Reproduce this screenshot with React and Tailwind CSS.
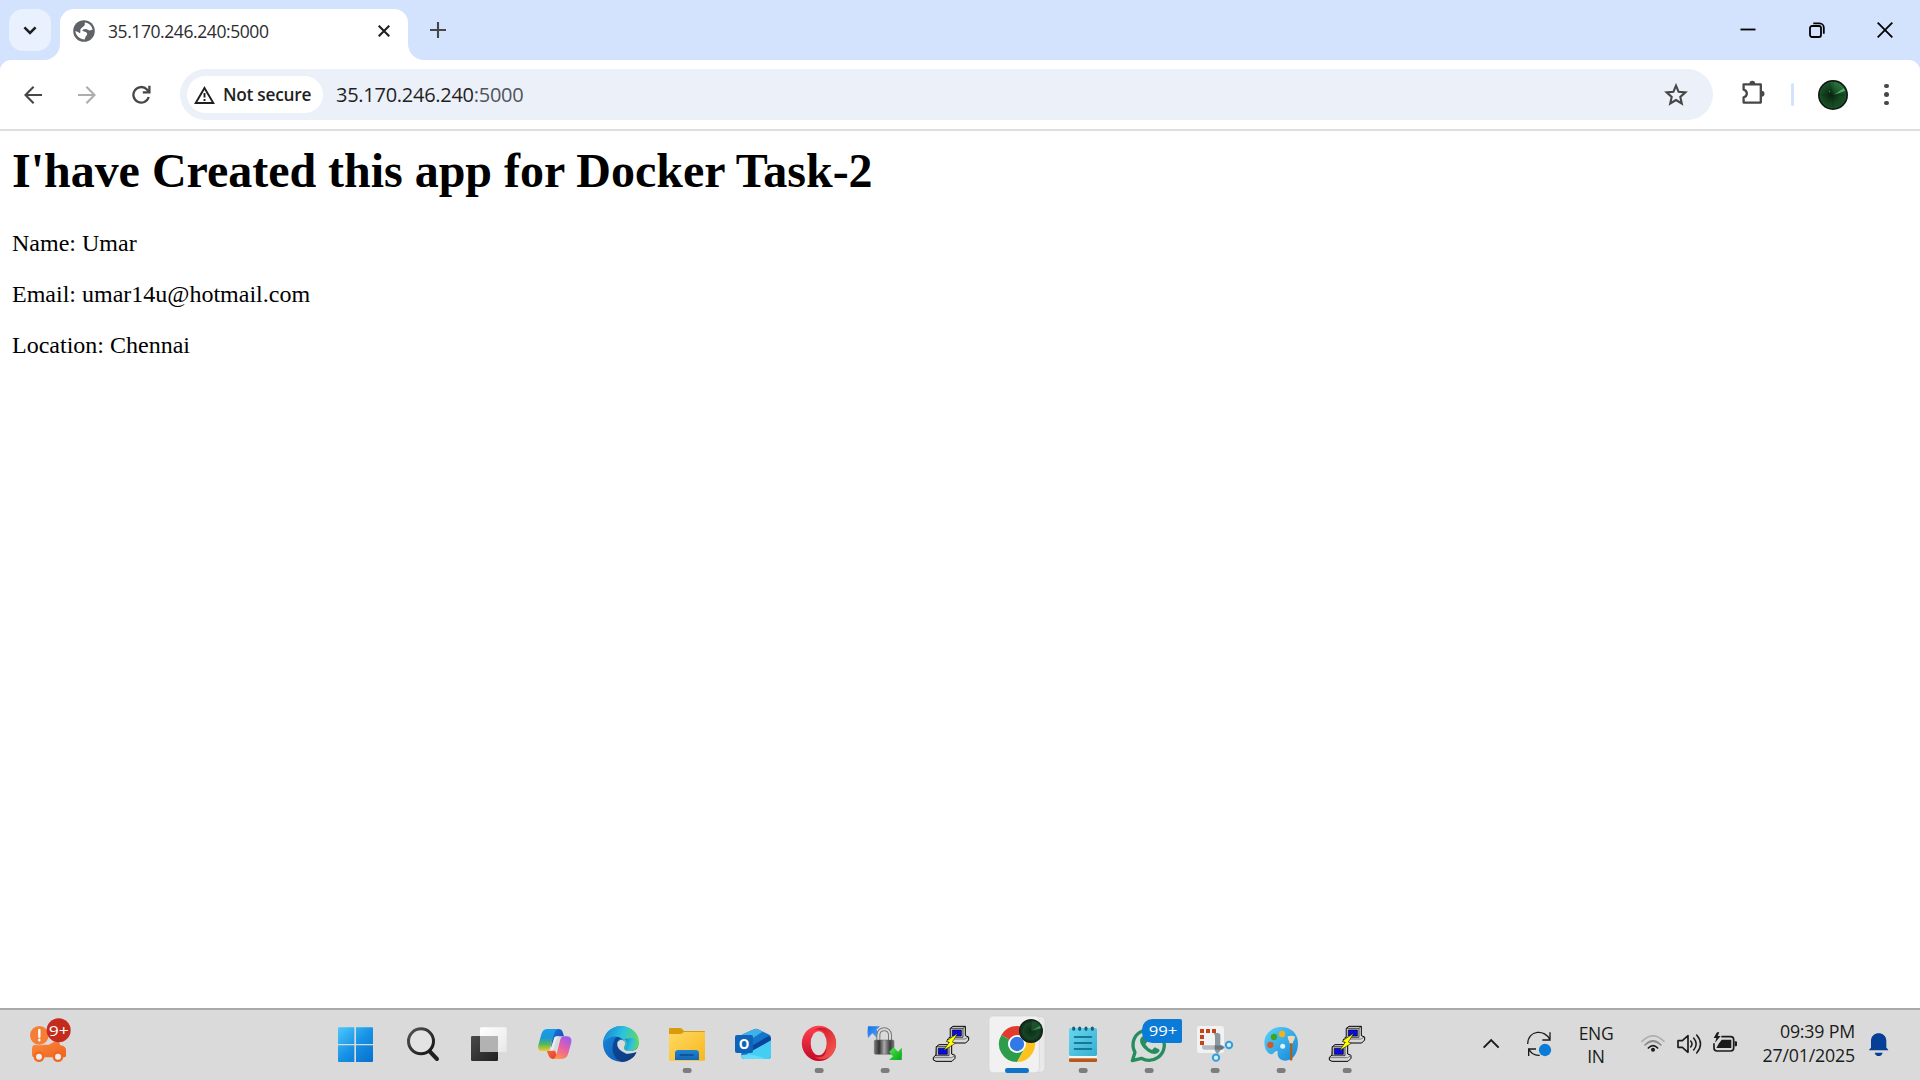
import React from "react";

const UI = "font-['Open_Sans','Noto_Sans',sans-serif]";

/* ---------- Browser chrome ---------- */

function GlobeIcon() {
  return (
    <svg width="22" height="22" viewBox="0 0 22 22">
      <circle cx="11" cy="11" r="10.8" fill="#5f6368" />
      <path d="M11.8 2.4C16 2.8 19 5.800 19.600 9.800L16.500 10.400 13 9Q9.600 8.800 9.200 10.800L13.200 12.200Q15.400 14 12.800 16.200L11.600 19.500C7 19.200 3 16 2.300 11L5.500 12.200Q7.200 14 7.400 12Q6.800 8.200 9.600 7.200L11.800 5z" fill="#fff" />
    </svg>
  );
}

function TabStrip() {
  return (
    <div className="flex h-[60px] bg-[#d3e2fd]">
      <div className="flex items-center pl-[9px] w-[60px]">
        <button className="flex h-[42px] w-[42px] items-center justify-center rounded-[14px] bg-[#e9f0fe]">
          <svg width="14" height="9" viewBox="0 0 14 9" fill="none" stroke="#1f1f1f" strokeWidth="2.6">
            <path d="M1.4 1.4 7 7l5.6-5.6" />
          </svg>
        </button>
      </div>
      <div className="relative mt-[9px] flex h-[51px] w-[348px] items-center rounded-t-[14px] bg-white pl-[13px] pr-[18px]">
        <svg className="absolute bottom-0 -left-[16px]" width="16" height="16">
          <path d="M16 0v16H0A16 16 0 0 0 16 0z" fill="#fff" />
        </svg>
        <svg className="absolute bottom-0 -right-[16px]" width="16" height="16">
          <path d="M0 0v16h16A16 16 0 0 1 0 0z" fill="#fff" />
        </svg>
        <div className="-mt-[8px]"><GlobeIcon /></div>
        <span className="ml-[13px] -mt-[8px] text-[17.5px] leading-6 tracking-[-0.42px] text-[#2c2d30]">35.170.246.240:5000</span>
        <svg className="-mt-[8px] ml-auto" width="12" height="12" viewBox="0 0 12 12" stroke="#1f1f1f" strokeWidth="2.1">
          <path d="M.7.7l10.6 10.6M11.3.7.7 11.3" />
        </svg>
      </div>
      <svg className="ml-[22px] mt-[22px]" width="16" height="16" viewBox="0 0 16 16" stroke="#474747" strokeWidth="2.1">
        <path d="M8 0v16M0 8h16" />
      </svg>
      <div className="ml-auto mt-[21px] flex h-[17px] w-[153px] items-center justify-between mr-[27px]">
        <svg width="16" height="16" viewBox="0 0 16 16" stroke="#000" strokeWidth="1.8"><path d="M.5 7.500h15" /></svg>
        <svg width="16" height="16" viewBox="0 0 16 16" fill="none" stroke="#000" strokeWidth="1.8">
          <rect x="1" y="4" width="11" height="11" rx="2" />
          <path d="M4.3 1.3h6.2a4.3 4.3 0 0 1 4.3 4.3v6.2" />
        </svg>
        <svg width="16" height="16" viewBox="0 0 16 16" stroke="#000" strokeWidth="1.8"><path d="M.7.7l14.6 14.6M15.3.7.7 15.3" /></svg>
      </div>
    </div>
  );
}

function Avatar() {
  return (
    <svg width="30" height="30" viewBox="0 0 30 30">
      <defs>
        <radialGradient id="radar" cx=".42" cy=".5" r=".6">
          <stop offset="0" stopColor="#0a2210" /><stop offset=".6" stopColor="#154a22" /><stop offset="1" stopColor="#174f26" />
        </radialGradient>
        <linearGradient id="sweep" x1="0" y1="1" x2=".7" y2="0">
          <stop offset="0" stopColor="#12401d" /><stop offset="1" stopColor="#3a8f50" />
        </linearGradient>
      </defs>
      <circle cx="15" cy="15" r="15" fill="#101a13" />
      <circle cx="15" cy="15" r="13" fill="url(#radar)" stroke="#1f5a2e" strokeWidth=".8" />
      <path d="M15 15 13 2.200A13 13 0 0 1 26 8z" fill="url(#sweep)" opacity=".7" />
      <path d="M16 14.800 25.800 8 27.200 11z" fill="#4fae68" />
      <path d="M2 15h25M15 2v25" stroke="#0a2a12" strokeWidth=".5" opacity=".6" />
      <circle cx="11.5" cy="11.500" r=".7" fill="#5c7a3c" />
    </svg>
  );
}

function Toolbar() {
  return (
    <div className="bg-[#d3e2fd]">
      <div className="flex h-[71px] items-center rounded-t-[11px] border-b-2 border-[#dedede] bg-white pl-[24px]">
        <svg className="mt-px" width="18" height="18" viewBox="0 0 18 18" fill="none" stroke="#474747" strokeWidth="2.1"><path d="M18 9H1.6M9.6.8 1.5 9l8.1 8.2" /></svg>
        <svg className="ml-[36px] mt-px" width="18" height="18" viewBox="0 0 18 18" fill="none" stroke="#adadad" strokeWidth="2.1"><path d="M0 9h16.4M8.4.8 16.5 9l-8.1 8.2" /></svg>
        <svg className="ml-[36px]" width="19" height="20" viewBox="0 0 19 20" fill="none" stroke="#474747" strokeWidth="2.3">
          <path d="M16.7 12A7.8 7.8 0 1 1 15 4.6l2.4 2.4" /><path d="M17.4.8v6.6h-6.6" />
        </svg>
        <div className="ml-[29px] flex h-[51px] w-[1533px] items-center rounded-full bg-[#ecf0f9] pl-[7px] pr-[25px]">
          <div className="flex h-[37px] w-[136px] items-center rounded-full bg-white pl-[7px]">
            <svg width="21" height="18" viewBox="0 0 21 18" fill="none" stroke="#1f1f1f" strokeWidth="1.9">
              <path d="M10.5 1.9 19.3 17H1.7z" /><path d="M10.5 7v4.6M10.5 13v2" />
            </svg>
            <span className="ml-[8px] whitespace-nowrap text-[17.3px] font-semibold leading-6 tracking-[-0.26px] text-[#1f1f1f]">Not secure</span>
          </div>
          <span className="ml-[13px] text-[20px] leading-7 tracking-[-0.27px] text-[#1f1f1f]">35.170.246.240<span className="text-[#50555b]">:5000</span></span>
          <svg className="ml-auto" width="24" height="23" viewBox="0 0 24 23" fill="none" stroke="#474747" strokeWidth="2.1">
            <path d="m12 2.6 2.6 6.2 6.8.6-5.1 4.5 1.5 6.6-5.8-3.5-5.8 3.5 1.5-6.6-5.1-4.5 6.8-.6z" />
          </svg>
        </div>
        <svg className="ml-[28px] -mt-[4px]" width="25" height="25" viewBox="0 0 25 25">
          <path d="M2.6 4.4h17.2v18.2H2.6v-5.2c2.2-.6 3.2-2 3.2-3.9S4.800 10.200 2.600 9.600z" fill="none" stroke="#474747" strokeWidth="2.3" strokeLinejoin="round" />
          <path d="M8.400 4a2.900 3.200 0 0 1 5.800 0zM20.500 10.700a3 3 0 0 1 0 6z" fill="#474747" />
        </svg>
        <div className="ml-[25px] h-[23px] w-[3px] rounded-full bg-[#d3e2fd]" />
        <div className="ml-[24px]"><Avatar /></div>
        <div className="ml-[36px] flex flex-col gap-[4px]">
          <i className="h-[4.500px] w-[4.500px] rounded-full bg-[#474747]" />
          <i className="h-[4.500px] w-[4.500px] rounded-full bg-[#474747]" />
          <i className="h-[4.500px] w-[4.500px] rounded-full bg-[#474747]" />
        </div>
      </div>
    </div>
  );
}

/* ---------- Taskbar ---------- */

function Cell({ x, children, running }) {
  return (
    <svg className="block shrink-0" width="66" height="70" viewBox={`${x} 30 198 210`}>
      {children}
      {running && <rect x={x + 86} y="204" width="27" height="15" rx="7" fill="#7d7d7d" />}
    </svg>
  );
}

function Grad({ id, from, to, x2 = 1, y2 = 1 }) {
  return (
    <linearGradient id={id} x1="0" y1="0" x2={x2} y2={y2}>
      <stop offset="0" stopColor={from} /><stop offset="1" stopColor={to} />
    </linearGradient>
  );
}

function Putty() {
  return (
    <g stroke="#000" strokeWidth="3" strokeLinejoin="miter">
      <path d="M301 85l8-6h37v28l10 4v9l-9 9h-46l-8-4v-8l8-7z" fill="#d9d9d9" />
      <path d="M301 85h38v27h-38zM339 85l7-6" fill="#c9c9c9" strokeWidth="2" />
      <path d="M307 90h27v18h-27z" fill="#0a0af0" strokeWidth="2" />
      <path d="M294 117h51l10-6" fill="none" stroke="#777" strokeWidth="3" />
      <path d="M259 140l8-6h38v28l10 4v9l-9 9h-48l-8-4v-8l8-7z" fill="#d9d9d9" />
      <path d="M259 140h38v27h-38zM297 140l7-6" fill="#c9c9c9" strokeWidth="2" />
      <path d="M265 145h27v18h-27z" fill="#0a0af0" strokeWidth="2" />
      <path d="M252 173h53l9-6" fill="none" stroke="#777" strokeWidth="3" />
      <path d="M324 99l-36 25 10 3-18 25 36-22-9-4z" fill="#ff0" strokeWidth="1.500" />
    </g>
  );
}

function Apps() {
  return (
    <div className="ml-[253px] flex">
      <Cell x={12}>
        <defs><linearGradient id="win" gradientUnits="userSpaceOnUse" x1="54" y1="82" x2="150" y2="186"><stop offset="0" stopColor="#4cc8fb" /><stop offset=".55" stopColor="#1590e4" /><stop offset="1" stopColor="#0873cf" /></linearGradient></defs>
        <g fill="url(#win)"><path d="M57 82h46v50H54V85q0-3 3-3zM108 82h48q3 0 3 3v47h-51zM54 136h49v50H57q-3 0-3-3zM108 136h51v47q0 3-3 3h-48z" /></g>
      </Cell>
      <Cell x={210}>
        <defs><Grad id="mag" from="#555" to="#111" /></defs>
        <path d="M328 153l23 24" stroke="#202020" strokeWidth="12" strokeLinecap="round" />
        <circle cx="303" cy="124" r="37.500" fill="#e3e3e3" stroke="url(#mag)" strokeWidth="9" />
      </Cell>
      <Cell x={408}>
        <defs><Grad id="tv1" from="#4a4a4a" to="#202020" /><Grad id="tv2" from="#fff" to="#e8e8e8" /></defs>
        <rect x="453" y="108" width="81" height="75" rx="4" fill="url(#tv1)" />
        <rect x="480" y="82" width="80" height="74" rx="4" fill="url(#tv2)" />
        <path d="M480 108h54v48h-50q-4 0-4-4z" fill="#b2b2b2" />
      </Cell>
      <Cell x={606}>
        <defs>
          <linearGradient id="co1" x1="0" y1="0" x2="0" y2="1"><stop offset="0" stopColor="#159df0" /><stop offset=".4" stopColor="#1b98d2" /><stop offset=".7" stopColor="#57b75d" /><stop offset="1" stopColor="#f2cd20" /></linearGradient>
          <linearGradient id="co2" x1=".7" y1="0" x2=".2" y2="1"><stop offset="0" stopColor="#9d5bec" /><stop offset=".45" stopColor="#e45fa9" /><stop offset=".8" stopColor="#fb7e68" /><stop offset="1" stopColor="#ff9b4f" /></linearGradient>
          <Grad id="co3" from="#1779df" to="#173da5" /><Grad id="co4" from="#f26b38" to="#e7372b" />
        </defs>
        <path d="M698 87h18q9 0 12 9l4 13h-16q-10 0-14 11l-9 25z" fill="url(#co3)" />
        <path d="M680 152h25l10 25h-17q-8 0-11-8z" fill="url(#co4)" />
        <path d="M683 87h31q-8 2-11 12l-12 43q-3 11-13 11h-12q-14 0-11-18l9-32q4-16 19-16z" fill="url(#co1)" />
        <path d="M730 109h12q14 1 12 18l-9 33q-5 17-19 17h-28q8-2 11-12l11-43q3-13 10-13z" fill="url(#co2)" />
        <path d="M703 112q3-3 7-3h8q-7 2-10 12l-7 25q-2 5-6 6h-4z" fill="#efe9f1" />
      </Cell>
      <Cell x={24}>
        <defs>
          <linearGradient id="ed1" x1="0" y1=".3" x2="1" y2=".6"><stop offset="0" stopColor="#1689d6" /><stop offset=".5" stopColor="#2cc2df" /><stop offset="1" stopColor="#68dc4c" /></linearGradient>
          <Grad id="ed2" from="#1c8be0" to="#0b4fae" /><Grad id="ed3" from="#0c4a9a" to="#0d3b7b" />
        </defs>
        <circle cx="122" cy="132" r="53" fill="url(#ed2)" />
        <path d="M69 129C72 98 95 78 123 78c30 0 54 21 54 49 0 17-13 25-27 25-13 0-21-4-18-9 6-10 5-18-2-24-11-10-37-19-61 10z" fill="url(#ed1)" />
        <path d="M103 121q5-17 21-5-11 0-12 16 1 22 27 29 14 2 27-5 6-2 3 4c-8 15-24 25-42 26-20-5-31-26-29-45q0-10 5-20z" fill="url(#ed3)" />
        <path d="M170 156q6-4 9-7v20l-13 17h-20q17-10 24-30z" fill="#dadada" />
        <path d="M177 132q-3 18-20 20-28 2-25-9 6-10 2-19-12-11-22 3-4 22 27 34 17 1 38-7z" fill="#dadada" />
        <path d="M133 117q13 10 2 26c-4 6 5 9 16 9 14 0 26-8 26-25l-17-14z" fill="url(#ed1)" />
      </Cell>
      <Cell x={222} running>
        <defs><Grad id="fo" from="#ffd963" to="#f7b71d" /><Grad id="fo2" from="#1f84d2" to="#1566b0" x2={0} /></defs>
        <path d="M267 87q0-3 4-3h29q4 0 7 4l5 5h60q3 0 3 3v12H267z" fill="#d99b0b" />
        <path d="M267 102h34q4 0 7-3l4-3h63v83q0 3-4 3H271q-4 0-4-3z" fill="url(#fo)" />
        <path d="M285 180v-20q0-10 10-10h52q10 0 10 10v20z" fill="url(#fo2)" />
        <path d="M301 165h38" stroke="#0b4b8f" strokeWidth="5" strokeLinecap="round" />
      </Cell>
      <Cell x={420}>
        <defs><Grad id="ou" from="#1384dc" to="#43d3f5" /></defs>
        <path d="M484 111q0-5 4-8l34-15q6-3 12 0l34 16q5 3 5 9v54q0 10-10 10h-70q-9 0-9-9z" fill="#1476ca" />
        <path d="M488 103l34-15q6-3 13 0l13 7-42 27-18-4z" fill="#3fb0e8" />
        <path d="M516 137l50-29q7 4 7 11-1 5-6 8l-51 26z" fill="#08459b" />
        <path d="M516 153l57-32v46q0 10-10 10h-70q6-18 23-24z" fill="#46cdf3" />
        <path d="M484 166q28-8 73 11h-64q-9 0-9-9z" fill="#62dcf8" />
        <rect x="465" y="105" width="54" height="54" rx="6" fill="#0f64ba" />
        <text x="492" y="147" textAnchor="middle" fontSize="40" fontWeight="700" fill="#fff" fontFamily="Open Sans">O</text>
      </Cell>
      <Cell x={618} running>
        <defs><Grad id="op1" from="#ff4251" to="#c30825" x2={0} /><Grad id="op2" from="#c41126" to="#ff5f54" /></defs>
        <ellipse cx="717" cy="130" rx="51.500" ry="53" fill="url(#op1)" />
        <path d="M703 89c30-16 65 1 65 41s-38 60-65 40c35 7 37-10 37-40s-8-45-37-41z" fill="url(#op2)" />
        <ellipse cx="716" cy="130" rx="24" ry="36" fill="#dbdbdb" />
      </Cell>
      <Cell x={6} running>
        <defs>
          <linearGradient id="lk" x1="0" x2="1"><stop offset="0" stopColor="#777" /><stop offset=".25" stopColor="#333" /><stop offset=".5" stopColor="#aaa" /><stop offset=".8" stopColor="#3b3b3b" /><stop offset="1" stopColor="#777" /></linearGradient>
          <Grad id="gr" from="#4be94b" to="#08a318" /><Grad id="bl" from="#1670e6" to="#58a7ff" />
        </defs>
        <path d="M54 79h36l-11 10 8 9v16h-6l-14-14-13 14q-3-18 0-35z" fill="url(#bl)" />
        <path d="M85 122v-16c0-24 35-24 35 0v16" fill="none" stroke="#777" strokeWidth="12" />
        <path d="M85 122v-16c0-24 35-24 35 0v16" fill="none" stroke="#dcdcdc" strokeWidth="6" />
        <rect x="73" y="120" width="59" height="43" rx="4" fill="url(#lk)" stroke="#666" strokeWidth="1.500" />
        <path d="M131 142l13 13 11-12q2 19 0 37h-38l12-11-12-13z" fill="url(#gr)" />
      </Cell>
      <Cell x={204}><Putty /></Cell>
      <Cell x={402}>
        <rect x="424" y="49" width="161" height="168" rx="12" fill="#e9e9e9" stroke="#cfcfcf" strokeWidth="2" />
        <rect x="417" y="48" width="151" height="170" rx="13" fill="#f1f1f1" stroke="#d3d3d3" strokeWidth="2" />
        <path d="M501 132 454.200 105A54 54 0 0 1 547.800 105z" fill="#e33b2e" />
        <path d="M501 132 454.200 105A54 54 0 0 0 501 186L524 145z" fill="#2d9d4c" />
        <path d="M501 105h46.800A54 54 0 0 1 501 186l23.500-41z" fill="#fcc31e" />
        <circle cx="501" cy="132" r="27" fill="#fff" /><circle cx="501" cy="132" r="21.500" fill="#3279e8" />
        <defs><radialGradient id="rd2"><stop offset="0" stopColor="#0a2c15" /><stop offset=".65" stopColor="#174525" /><stop offset="1" stopColor="#101c14" /></radialGradient></defs>
        <circle cx="543" cy="93" r="36" fill="url(#rd2)" />
        <path d="M543 93l4-31q18 3 26 16z" fill="#215a32" opacity=".7" /><path d="M545 92l25-15 3 8z" fill="#3f8c55" />
        <rect x="465" y="204" width="72" height="15" rx="7" fill="#1173c6" />
      </Cell>
      <Cell x={600} running>
        <defs><Grad id="np" from="#69d6ee" to="#35b0d2" /></defs>
        <rect x="657" y="174" width="84" height="12" rx="3" fill="#b85a17" /><path d="M657 168h84v7h-84z" fill="#f4f4f4" />
        <rect x="657" y="84" width="84" height="84" rx="5" fill="url(#np)" />
        <path d="M671 84v4M689 84v4M708 84v4M727 84v4" stroke="#155f7c" strokeWidth="9" strokeLinecap="round" />
        <path d="M674 111h50M674 129h50M674 147h50" stroke="#167998" strokeWidth="5.500" strokeLinecap="round" />
      </Cell>
      <Cell x={-12} running>
        <path d="M37 182l8-25c-12-21-5-48 14-60 23-14 52-8 66 12 13 20 10 48-11 63-16 11-35 11-50 3z" fill="#d8ded9" stroke="#278c60" strokeWidth="10" strokeLinejoin="round" />
        <path d="M65 111q7-6 12 0l6 13-7 9q7 12 20 17l8-8 13 6q4 5-1 9-12 11-32-2-21-14-24-31-1-7 5-13z" fill="#278c60" />
        <rect x="66" y="57" width="120" height="72" rx="31" fill="#0b7bd8" /><path d="M150 57h31q5 0 5 5v62q0 5-5 5h-31z" fill="#0b7bd8" />
        <text x="129" y="109" textAnchor="middle" fontSize="46" textLength="86" lengthAdjust="spacingAndGlyphs" fill="#fff" fontFamily="Open Sans">99+</text>
      </Cell>
      <Cell x={186} running>
        <rect x="231" y="78" width="81" height="81" rx="8" fill="#f0f2f3" />
        <path d="M240 87h12v12h-12zM258 87h12v12h-12zM276 87h12v12h-12zM240 105h12v12h-12zM240 123h12v12h-12z" fill="#c64318" />
        <path d="M281 99h12q8 0 8 8v45l-9 10-7-9v-46z" fill="#8c969d" />
        <path d="M246 136h61l9 6-7 7h-56q-7 0-7-7z" fill="#b4bbc0" /><path d="M284 136h20l9 6-8 7h-21z" fill="#68747c" />
        <g fill="#d8eefa" stroke="#309ede" strokeWidth="6"><circle cx="327" cy="135" r="9.500" /><circle cx="288" cy="173" r="9.500" /></g>
      </Cell>
      <Cell x={384} running>
        <defs><Grad id="pa" from="#5ad3f8" to="#1586d9" /></defs>
        <path d="M482 81c31-1 52 20 52 48 0 33-17 53-38 53-16 0-25-12-23-24 2-8-7-6-12 1-6 8-18 2-25-13-11-35 12-64 46-65z" fill="url(#pa)" />
        <circle cx="462" cy="111" r="9.500" fill="#41a51c" /><circle cx="486" cy="102" r="9.500" fill="#f3b317" /><circle cx="451" cy="135" r="9.500" fill="#d3562d" /><circle cx="488" cy="139" r="7.500" fill="#e2f2fb" />
        <path d="M510 128h7v52q-4 5-7 0z" fill="#ad611c" />
        <path d="M503 109q10-4 22 0-1 12-6 16v5h-11v-5q-5-5-5-16z" fill="#efd6b8" />
      </Cell>
      <Cell x={582} running><g transform="translate(378 0)"><Putty /></g></Cell>
    </div>
  );
}

function Tray() {
  return (
    <div className="ml-auto mr-[31px] flex h-[70px] text-[17.500px] text-[#1b1b1b]">
      <svg width="90" height="70" viewBox="60 30 270 210" fill="none" stroke="#1b1b1b" strokeWidth="5">
        <path d="M71 143l22.500-22.500L116 143" strokeWidth="6" />
        <g strokeWidth="4"><path d="M203 132c2-43 52-45 67-13M270 97v23h-23M239 166c-16 1-27-7-32-18M206 168v-21h22" /></g>
        <circle cx="255" cy="150" r="18.500" fill="#0b7bd8" stroke="none" />
      </svg>
      <div className="w-[52px] pt-[12px] text-center leading-[23px] tracking-[-0.300px]">
        <div>ENG</div><div>IN</div>
      </div>
      <svg className="ml-[13px]" width="110" height="70" viewBox="525 30 330 210" fill="none" stroke="#1b1b1b" strokeWidth="5">
        <g strokeLinecap="round"><path d="M546 124q33-33 66 0" stroke="#b0b0b0" /><path d="M555 135q24-24 48 0" stroke="#8d8d8d" /><path d="M565 144q14-14 28 0" /></g>
        <circle cx="579" cy="149" r="6" fill="#1b1b1b" stroke="none" />
        <path d="M654 122h13l17-15v50l-17-15h-13z" strokeLinejoin="round" />
        <g strokeWidth="4.500" strokeLinecap="round"><path d="M692 123q8 9 0 18M701 114q15 18 0 36M710 105q23 27 0 54" /></g>
        <path d="M784 110h28q9 0 9 9v25q0 9-9 9h-41q-9 0-9-9v-14" />
        <path d="M785 119h29v25h-45l7-13z" fill="#1b1b1b" stroke="none" />
        <path d="M824 124h4q3 0 3 3v9q0 3-3 3h-4z" fill="#1b1b1b" stroke="none" />
        <path d="M771 97l-10 17h8l-4 14 17-20h-9l5-11z" fill="#1b1b1b" stroke="none" />
      </svg>
      <div className="w-[110px] whitespace-nowrap pt-[9px] text-right text-[17.800px] leading-[24px] tracking-[-0.200px]">
        <div>09:39 PM</div><div>27/01/2025</div>
      </div>
      <svg className="ml-[14px]" width="20" height="70" viewBox="1225 30 60 210" fill="#053f96">
        <path d="M1225 151q0-3 6-8v-20c0-31 46-31 46 0v20q6 5 6 8zM1242 158h24q-3 10-12 10t-12-10z" />
      </svg>
    </div>
  );
}

function Taskbar() {
  return (
    <footer className="flex h-[72px] border-t-2 border-[#a9a9a9] bg-[#dadada]">
      <svg className="ml-[25px] shrink-0" width="46" height="70" viewBox="75 30 138 210">
        <defs><Grad id="car" from="#fa8a3f" to="#ee5f1b" /></defs>
        <path d="M105 134h41l16-8h15l4 10q17 2 17 14v17q0 5-6 5h-6a14 14 0 0 1-26 0h-31a14 14 0 0 1-26 0q-7 0-7-6v-20q0-10 9-12z" fill="url(#car)" />
        <circle cx="117" cy="170" r="16" fill="#f0691f" /><circle cx="174" cy="170" r="16" fill="#f0691f" />
        <circle cx="117" cy="170" r="9" fill="#eee" /><circle cx="174" cy="170" r="9" fill="#eee" />
        <circle cx="118" cy="106" r="30" fill="#dadada" /><circle cx="118" cy="106" r="28" fill="#f57d35" />
        <path d="M118 90v20M118 119v2" stroke="#fff" strokeWidth="7" strokeLinecap="round" />
        <circle cx="176" cy="91" r="36" fill="#c42b1c" />
        <text x="176" y="107" textAnchor="middle" fontSize="46" textLength="60" lengthAdjust="spacingAndGlyphs" fill="#fff" fontFamily="Open Sans">9+</text>
      </svg>
      <Apps />
      <Tray />
    </footer>
  );
}

export default function App() {
  return (
    <div className={`flex h-screen w-screen flex-col overflow-hidden bg-white ${UI}`}>
      <TabStrip />
      <Toolbar />
      <main className="flex-1 bg-white pl-[12px] pt-[12px] font-['Liberation_Serif','Times_New_Roman',serif] text-black">
        <h1 className="text-[48px] font-bold leading-[55px] tracking-[-0.020px]">I'have Created this app for Docker Task-2</h1>
        <div className="mt-[32px] flex flex-col gap-[24px] text-[24px] leading-[27px]">
          <p>Name: Umar</p>
          <p>Email: umar14u@hotmail.com</p>
          <p>Location: Chennai</p>
        </div>
      </main>
      <Taskbar />
    </div>
  );
}
